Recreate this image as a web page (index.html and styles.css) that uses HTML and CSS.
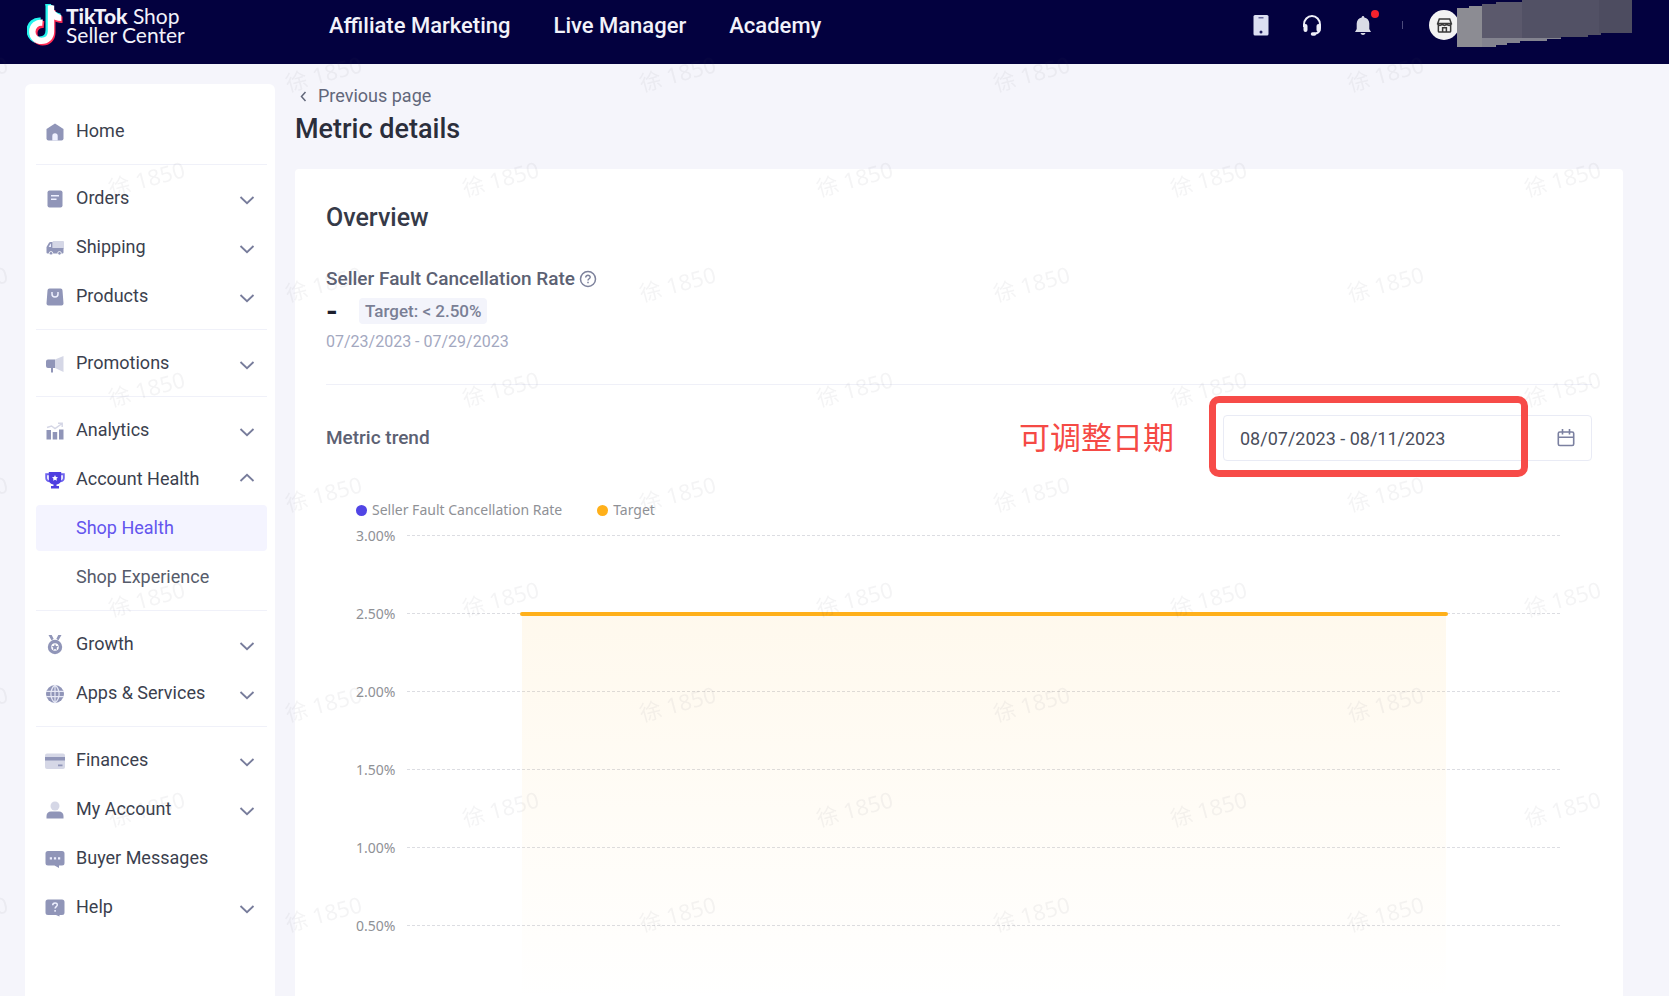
FILE: index.html
```html
<!DOCTYPE html>
<html lang="en">
<head>
<meta charset="utf-8">
<title>TikTok Shop Seller Center - Metric details</title>
<meta name="viewport" content="width=device-width, initial-scale=1">
<link rel="stylesheet" href="styles.css">
</head>
<body>
<svg class="sprite" aria-hidden="true">
  <symbol id="chevron" viewBox="0 0 16 16"><path d="M1.500 5 8 11.200 14.500 5" fill="none" stroke="currentColor" stroke-width="1.800"/></symbol>
</svg>
<div class="page">
  <header class="topbar">
    <a class="brand" href="#" aria-label="TikTok Shop Seller Center">
      <svg class="brand-mark" viewBox="0 0 36 42" aria-hidden="true">
        <g fill="none">
          <path d="M14.500 18c-5.500-.5-10.500 3.300-10.500 9.300 0 6 4.500 9.700 9.500 9.700 5.500 0 9.500-4 9.500-9.700V2" stroke="#25f4ee" stroke-width="7" transform="translate(-1 -1)"/>
          <path d="M18 0h6c.5 5 4 8.500 9.500 9.500V15c-4 0-7.500-1-10.500-3z" fill="#25f4ee"/>
          <path d="M16 19.500c-5.500-.5-10 2.800-10 8.500 0 5.500 4 9 8.700 9 5.500 0 9.300-3.700 9.300-9.200V5" stroke="#fe2c55" stroke-width="7" transform="translate(1 1)"/>
          <path d="M22 3h3.500c1 5 4.500 8.500 10 9.500v6.500c-4.500 0-8-1.300-11-3.500z" fill="#fe2c55"/>
          <path d="M15.500 18.700c-5.500-.5-10.200 3-10.200 9 0 5.500 4.300 9.200 9.200 9.200 5.500 0 9.500-3.900 9.500-9.400V1.500" stroke="#fff" stroke-width="6.400"/>
          <path d="M21.500 1.500h4c.9 5 4 8.500 8.800 9.500v6c-4.300 0-7.700-1.300-10.700-3.500z" fill="#fff"/>
        </g>
      </svg>
      <span class="brand-text"><span><b>TikTok</b> Shop</span><span>Seller Center</span></span>
    </a>
    <nav class="topnav" aria-label="Primary">
      <a href="#">Affiliate Marketing</a>
      <a href="#">Live Manager</a>
      <a href="#">Academy</a>
    </nav>
    <div class="tools">
      <button class="tool" type="button" aria-label="Mobile app">
        <svg viewBox="0 0 24 24"><rect x="4.500" y="2" width="15" height="20.500" rx="1.500" fill="#dcdff2"/><path d="M9.500 4.800h5" stroke="#4a4a86" stroke-width="1.200"/><circle cx="12" cy="19" r="1.500" fill="#1c1a5c"/></svg>
      </button>
      <button class="tool" type="button" aria-label="Support">
        <svg viewBox="0 0 24 24" fill="none" stroke="#eeeff8"><path d="M4 14v-2.500a8 8.500 0 0 1 16 0V15c0 4-2.500 5.500-6 5.800" stroke-width="2"/><path d="M5.500 13v4M18.500 13v4" stroke-width="4" stroke-linecap="round"/><path d="M12.500 21h2" stroke-width="3.500" stroke-linecap="round"/></svg>
      </button>
      <button class="tool" type="button" aria-label="Notifications">
        <svg viewBox="0 0 24 24" fill="#d9dbe6"><path d="M12 3c.8 0 1.200.6 1.300 1.400 3 .6 5 3 5 6.100v5.500l1.700 3H4l1.700-3v-5.500c0-3.100 2-5.500 5-6.100C10.800 3.600 11.200 3 12 3zM9.500 20h5c-.4 1.300-1.300 2-2.500 2s-2.100-.7-2.500-2z"/></svg>
        <span class="dot"></span>
      </button>
      <span class="split"></span>
      <button class="account" type="button" aria-label="Account">
        <span class="avatar"><svg viewBox="0 0 18 18" fill="none" stroke="#3a3a3a" stroke-width="1.600"><path d="M3.500 2h11l1.700 5H1.800zM1.800 7c0 2.500 4.800 2.500 4.800 0 0 2.500 4.800 2.500 4.800 0 0 2.500 4.800 2.500 4.800 0M2.500 8.500V15q0 1 1 1h11q1 0 1-1V8.500M7 16v-4.500h4V16"/></svg></span>
        <svg class="mask" viewBox="0 0 175 50" aria-hidden="true">
          <path d="M0 8h12V6h13V4h14V47H0z" fill="#8c8c93"/>
          <path d="M25 36h79v3H90v2H63v2H50v2H38v2H25z" fill="#83838f"/>
          <path d="M25 4h14V2h26V38H25z" fill="#5b596c"/>
          <path d="M65 0h110v33h-31v2h-13v2h-27v1H65z" fill="#525165"/>
          <path d="M142 0h33v33h-33z" fill="#4d4c60"/>
        </svg>
      </button>
    </div>
  </header>

  <div class="body">
    <nav class="sidebar" aria-label="Seller menu">
      <div class="group">
        <a class="item" href="#"><svg class="icon" viewBox="0 0 20 20"><path d="M10 1.500 18.500 7v9.500a2 2 0 0 1-2 2h-13a2 2 0 0 1-2-2V7z" fill="#9095b8"/><path d="M7.300 18.500V14a2.700 2.700 0 0 1 5.400 0v4.500z" fill="#eef0ff"/></svg><span>Home</span></a>
      </div>
      <div class="group">
        <button class="item" type="button"><svg class="icon" viewBox="0 0 20 20"><rect x="2.500" y="1.500" width="15" height="17" rx="2" fill="#9095b8"/><path d="M6 6.800h8M6 10.200h5.500" stroke="#eef0ff" stroke-width="1.400"/></svg><span>Orders</span><svg class="chev"><use href="#chevron"/></svg></button>
        <button class="item" type="button"><svg class="icon" viewBox="0 0 20 20"><rect x="7.500" y="3" width="11.500" height="8" rx="1" fill="#d5d7e6"/><path d="M7.500 4H5.500Q4.500 4 4 4.800L1.500 9v5.500q0 1 1 1h15q1 0 1-1V10h-11z" fill="#9095b8"/><path d="M3.600 9 5.500 5.800H6V9z" fill="#eef0ff"/><circle cx="6" cy="15.300" r="1.800" fill="#9095b8" stroke="#fff" stroke-width=".8"/><circle cx="14.500" cy="15.300" r="1.800" fill="#9095b8" stroke="#fff" stroke-width=".8"/></svg><span>Shipping</span><svg class="chev"><use href="#chevron"/></svg></button>
        <button class="item" type="button"><svg class="icon" viewBox="0 0 20 20"><path d="M4.500 1.500h11a2 2 0 0 1 2 2l1 13a2 2 0 0 1-2 2h-13a2 2 0 0 1-2-2l1-13a2 2 0 0 1 2-2z" fill="#9095b8"/><path d="M7 5v2a3 3 0 0 0 6 0V5" fill="none" stroke="#eef0ff" stroke-width="1.500"/></svg><span>Products</span><svg class="chev"><use href="#chevron"/></svg></button>
      </div>
      <div class="group">
        <button class="item" type="button"><svg class="icon" viewBox="0 0 20 20"><path d="M10 5.500 18.500 2v16L10 14z" fill="#d5d7e6"/><path d="M3 5.500h7V14H8v4.500H6V14H3a2 2 0 0 1-2-2V7.500a2 2 0 0 1 2-2z" fill="#9095b8"/></svg><span>Promotions</span><svg class="chev"><use href="#chevron"/></svg></button>
      </div>
      <div class="group">
        <button class="item" type="button"><svg class="icon" viewBox="0 0 20 20"><path d="M1.500 9h4.500v9.500H1.500zM7.700 11h4.500v7.500H7.700zM14 8.500h4.500v10H14z" fill="#9095b8"/><path d="M2 6.500 6.500 5 10 7.500 16.500 3M13 2.200h4.200V6" fill="none" stroke="#d5d7e6" stroke-width="1.500"/></svg><span>Analytics</span><svg class="chev"><use href="#chevron"/></svg></button>
        <button class="item" type="button" aria-expanded="true"><svg class="icon" viewBox="0 0 20 20"><path d="M4.500 4.200h-3.300V8c0 2 1.500 3.200 4 3.300M15.500 4.200h3.300V8c0 2-1.500 3.200-4 3.300" fill="none" stroke="#6f64ee" stroke-width="1.900"/><path d="M3.800 2h12.400v7.500c0 3-2 4.800-4.700 5v1.500h2.500v2.500H6V16h2.500v-1.500c-2.700-.2-4.700-2-4.700-5z" fill="#4f3fe0"/><path d="m10 5 .9 1.900 2.100.3-1.500 1.500.4 2.100-1.900-1-1.900 1 .4-2.100L7 7.200l2.100-.3z" fill="#fff"/></svg><span>Account Health</span><svg class="chev up"><use href="#chevron"/></svg></button>
        <a class="item sub current" href="#" aria-current="page"><span>Shop Health</span></a>
        <a class="item sub" href="#"><span>Shop Experience</span></a>
      </div>
      <div class="group">
        <button class="item" type="button"><svg class="icon" viewBox="0 0 20 20"><path d="M3.500 0h3.200l2 4-2.200 1.200zM16.500 0h-3.200l-2 4 2.200 1.200z" fill="#9095b8"/><circle cx="10" cy="12" r="5.500" fill="#fff" stroke="#9095b8" stroke-width="3.400"/><path d="m10 8.700 1 2.200 2.400.3-1.700 1.600.4 2.300-2.100-1.100-2.100 1.100.4-2.300-1.700-1.600 2.400-.3z" fill="#9095b8"/></svg><span>Growth</span><svg class="chev"><use href="#chevron"/></svg></button>
        <button class="item" type="button"><svg class="icon" viewBox="0 0 20 20"><circle cx="10" cy="10" r="9" fill="#9095b8"/><path d="M1 7.300h18M1 12.700h18M10 1v18M10 1c-5.500 5-5.500 13 0 18M10 1c5.500 5 5.500 13 0 18" fill="none" stroke="#e6e8f5" stroke-width="1.200"/></svg><span>Apps &amp; Services</span><svg class="chev"><use href="#chevron"/></svg></button>
      </div>
      <div class="group">
        <button class="item" type="button"><svg class="icon" viewBox="0 0 20 20"><rect x="0" y="2.500" width="20" height="15.500" rx="2" fill="#d5d7e6"/><path d="M0 6h20v3.500H0zM13 13.500h4.500v1.800H13z" fill="#9095b8"/></svg><span>Finances</span><svg class="chev"><use href="#chevron"/></svg></button>
        <button class="item" type="button"><svg class="icon" viewBox="0 0 20 20"><circle cx="10" cy="6" r="4.500" fill="#d5d7e6"/><path d="M1.500 18.500V16c0-3 2-4.500 4.500-4.500h8c2.500 0 4.500 1.500 4.500 4.500v2.500z" fill="#9095b8"/></svg><span>My Account</span><svg class="chev"><use href="#chevron"/></svg></button>
        <a class="item" href="#"><svg class="icon" viewBox="0 0 20 20"><path d="M3 2h14a2.500 2.500 0 0 1 2.500 2.500v9.500a2.500 2.500 0 0 1-2.500 2.500h-3v2.500l-4.500-2.500H3A2.500 2.500 0 0 1 .5 14V4.500A2.500 2.500 0 0 1 3 2z" fill="#9095b8"/><path d="M4.800 8.300h2.200v2.200H4.800zM8.900 8.300h2.200v2.200H8.900zM13 8.300h2.200v2.200H13z" fill="#eef0ff"/></svg><span>Buyer Messages</span></a>
        <button class="item" type="button"><svg class="icon" viewBox="0 0 20 20"><path d="M3 1.500h14A2.500 2.500 0 0 1 19.500 4v10.500a2.500 2.500 0 0 1-2.500 2.500h-2.500v1.500L11 17H3a2.500 2.500 0 0 1-2.500-2.500V4A2.500 2.500 0 0 1 3 1.500z" fill="#9095b8"/><path d="M7.700 7.300c0-3.300 4.800-3 4.600-.3-.1 1.600-2.200 1.700-2.200 3.500M10.100 12v1.800" fill="none" stroke="#eef0ff" stroke-width="1.500"/></svg><span>Help</span><svg class="chev"><use href="#chevron"/></svg></button>
      </div>
    </nav>

    <main class="content">
      <a class="back" href="#"><svg viewBox="0 0 16 16"><path d="M10.500 4 6.500 8.500 10.500 13" fill="none" stroke="currentColor" stroke-width="1.500"/></svg>Previous page</a>
      <h1>Metric details</h1>
      <section class="card">
        <h2>Overview</h2>
        <h3 class="metric">Seller Fault Cancellation Rate
          <svg viewBox="0 0 18 18" fill="none" stroke="#7d829c" stroke-width="1.500"><circle cx="9" cy="9" r="7.500"/><path d="M6.700 7.500c0-3 4.600-2.700 4.500-.2-.1 1.500-2.200 1.500-2.200 3.200M9 11.700v1.500"/></svg>
        </h3>
        <div class="value"><strong>-</strong><span class="target">Target: &lt; 2.50%</span></div>
        <p class="period">07/23/2023 - 07/29/2023</p>

        <div class="trend">
          <h3><label for="range">Metric trend</label></h3>
          <span class="note">可调整日期</span>
          <div class="picker">
            <input id="range" type="text" value="08/07/2023 - 08/11/2023">
            <button type="button" aria-label="Open calendar"><svg viewBox="0 0 18 18" fill="none" stroke="#7b80a0" stroke-width="1.600"><rect x="1.300" y="3" width="15.400" height="13.500" rx="1.500"/><path d="M1 8.300h16M5.500 0v5.500M12.500 0v5.500"/></svg></button>
            <span class="frame"></span>
          </div>
        </div>

        <div class="chart">
          <ul class="legend">
            <li class="rate">Seller Fault Cancellation Rate</li>
            <li class="goal">Target</li>
          </ul>
          <div class="plot">
            <div class="tick"><span>3.00%</span></div>
            <div class="tick"><span>2.50%</span></div>
            <div class="tick"><span>2.00%</span></div>
            <div class="tick"><span>1.50%</span></div>
            <div class="tick"><span>1.00%</span></div>
            <div class="tick"><span>0.50%</span></div>
            <div class="series"><div class="area"></div></div>
          </div>
        </div>
      </section>
    </main>
  </div>
  <svg class="watermark" aria-hidden="true">
    <defs>
      <pattern id="wm" x="240" width="354" height="210" patternUnits="userSpaceOnUse">
        <text x="48" y="92" transform="rotate(-15 48 92)">徐 1850</text>
        <text x="225" y="197" transform="rotate(-15 225 197)">徐 1850</text>
      </pattern>
    </defs>
    <rect width="100%" height="100%" fill="url(#wm)"/>
  </svg>
</div>
</body>
</html>
```
FILE: styles.css
```css
* { box-sizing: border-box; }

body {
  margin: 0;
  background: #f5f5fb;
  color: #3b3f4e;
  font-family: Roboto, "Noto Sans CJK SC", sans-serif;
  font-size: 18px;
}

h1, h2, h3, p, ul { margin: 0; padding: 0; }
a { color: inherit; text-decoration: none; }
button {
  border: 0;
  padding: 0;
  background: none;
  color: inherit;
  font: inherit;
  cursor: pointer;
}

.sprite { position: absolute; width: 0; height: 0; }

.page {
  position: relative;
  display: flex;
  flex-direction: column;
  height: 100vh;
  overflow: hidden;
}

/* Top bar */
.topbar {
  display: flex;
  flex: none;
  align-items: center;
  height: 64px;
  padding: 0 37px 14px 27px;
  background: #03013f;
  color: #f2f2fa;
}
.brand { display: flex; align-items: center; gap: 3px; width: 302px; }
.brand-mark { width: 36px; height: 42px; }
.brand-text {
  display: grid;
  font-family: Lato, sans-serif;
  font-size: 21px;
  line-height: 19px;
}
.brand-text b { font-weight: 900; }
.topnav { display: flex; gap: 43px; flex: 1; font-size: 22px; font-weight: 500; }
.tools { display: flex; align-items: center; }
.tool { position: relative; width: 24px; height: 24px; margin-right: 27px; }
.tool svg { display: block; width: 24px; height: 24px; }
.dot {
  position: absolute;
  top: -3px;
  right: -4px;
  width: 8px;
  height: 8px;
  border-radius: 50%;
  background: #f5222d;
}
.split { width: 1px; height: 8px; background: #4c4b7c; }
.account { display: flex; align-items: center; margin-left: 26px; }
.avatar {
  display: grid;
  place-items: center;
  width: 30px;
  height: 30px;
  margin-right: -2px;
  border-radius: 50%;
  background: #f3f3f3;
}
.avatar svg { width: 17px; height: 17px; }
.mask { width: 175px; height: 50px; }

/* Layout */
.body {
  display: flex;
  flex: 1;
  min-height: 0;
  gap: 20px;
  padding: 20px 46px 0 25px;
}

/* Sidebar */
.sidebar {
  flex: none;
  width: 250px;
  padding: 24px 8px 0 11px;
  border-radius: 6px 6px 0 0;
  background: #fff;
}
.group { display: grid; gap: 3px; }
.group + .group {
  margin-top: 10px;
  padding-top: 10px;
  border-top: 1px solid #f0f1f9;
}
.item {
  display: flex;
  align-items: center;
  gap: 11px;
  height: 46px;
  padding: 0 12px 2px 9px;
  border-radius: 4px;
  text-align: left;
}
.item span { flex: 1; }
.icon { width: 20px; height: 20px; margin-top: 3px; }
.chev { width: 16px; height: 16px; margin-top: 5px; color: #777c9b; }
.chev.up { margin-top: 0; transform: rotate(180deg); }
.sub { padding-left: 40px; color: #565b6b; }
.current { background: #f4f4ff; color: #6355ee; }

/* Content */
.content { display: flex; flex: 1; flex-direction: column; min-width: 0; }
.back {
  display: flex;
  align-items: center;
  gap: 7px;
  height: 23px;
  color: #62677a;
}
.back svg { width: 16px; height: 16px; }
h1 { color: #2b2e3b; font-size: 27px; font-weight: 500; line-height: 44px; }
.card {
  flex: 1;
  min-height: 0;
  margin-top: 18px;
  padding: 31px 31px 0;
  border-radius: 4px 4px 0 0;
  background: #fff;
}
h2 { color: #363a48; font-size: 25px; font-weight: 500; line-height: 36px; }
h3 { color: #5c6173; font-size: 19px; font-weight: 500; line-height: 28px; }
.metric { display: flex; align-items: center; gap: 4px; margin-top: 29px; }
.metric svg { width: 18px; height: 18px; }
.value { display: flex; align-items: center; gap: 21px; height: 26px; margin-top: 5px; }
.value strong { width: 12px; color: #1c1f2e; font-size: 30px; line-height: 26px; }
.target {
  padding: 0 6px;
  border-radius: 4px;
  background: #f3f4fb;
  color: #7a7f95;
  font-size: 17px;
  font-weight: 500;
  line-height: 26px;
}
.period {
  padding: 6px 0 30px;
  border-bottom: 1px solid #eff0f8;
  color: #a3a8bf;
  font-size: 16px;
  line-height: 24px;
}
.trend { display: flex; align-items: center; margin-top: 30px; }
.trend h3 { flex: 1; }
.note {
  margin-right: 49px;
  padding-bottom: 4px;
  color: #f54a45;
  font-family: "Noto Sans CJK SC", sans-serif;
  font-size: 31px;
  line-height: 40px;
}
.picker {
  position: relative;
  display: flex;
  align-items: center;
  width: 369px;
  height: 46px;
  padding-right: 16px;
  border: 1px solid #e9ebf5;
  border-radius: 4px;
}
.picker input {
  flex: 1;
  min-width: 0;
  padding: 0 16px;
  border: 0;
  background: none;
  color: #4a4e5c;
  font: inherit;
  outline: 0;
}
.picker svg { display: block; width: 18px; height: 18px; }
.frame {
  position: absolute;
  top: -20px;
  right: 63px;
  bottom: -17px;
  left: -15px;
  border: 7px solid #f74b48;
  border-radius: 10px;
}

/* Chart */
.chart {
  padding: 37px 31px 0 30px;
  color: #8f9196;
  font-family: "Noto Sans", sans-serif;
  font-size: 14px;
}
.legend { display: flex; gap: 35px; line-height: 24px; list-style: none; }
.legend li { display: flex; align-items: center; gap: 5px; }
.legend li::before {
  width: 11px;
  height: 11px;
  border-radius: 50%;
  background: #5145e5;
  content: "";
}
.legend .goal::before { background: #ffb01a; }
.plot { position: relative; display: grid; grid-auto-rows: 78px; }
.tick { display: flex; align-items: center; gap: 10px; height: 26px; }
.tick span { width: 41px; }
.tick::after {
  flex: 1;
  height: 1px;
  background: repeating-linear-gradient(90deg, #dcdde2 0 3px, transparent 3px 5px);
  content: "";
}
/* Area under the 2.50% target, spanning the first to last day */
.series {
  position: absolute;
  top: 90px;
  right: 0;
  bottom: -13px;
  left: 51px;
}
.area {
  position: relative;
  width: 80%;
  height: 100%;
  margin: 0 auto;
  background: linear-gradient(rgba(255, 176, 26, .08), rgba(255, 176, 26, 0));
}
.area::before {
  position: absolute;
  top: 0;
  right: -2px;
  left: -2px;
  height: 4px;
  border-radius: 2px;
  background: #ffb01a;
  content: "";
}

.watermark {
  position: absolute;
  inset: 0;
  width: 100%;
  height: 100%;
  pointer-events: none;
}
.watermark text {
  fill: rgba(60, 60, 80, .06);
  font-family: "Noto Sans", "Noto Sans CJK SC", sans-serif;
  font-size: 22px;
}
```
